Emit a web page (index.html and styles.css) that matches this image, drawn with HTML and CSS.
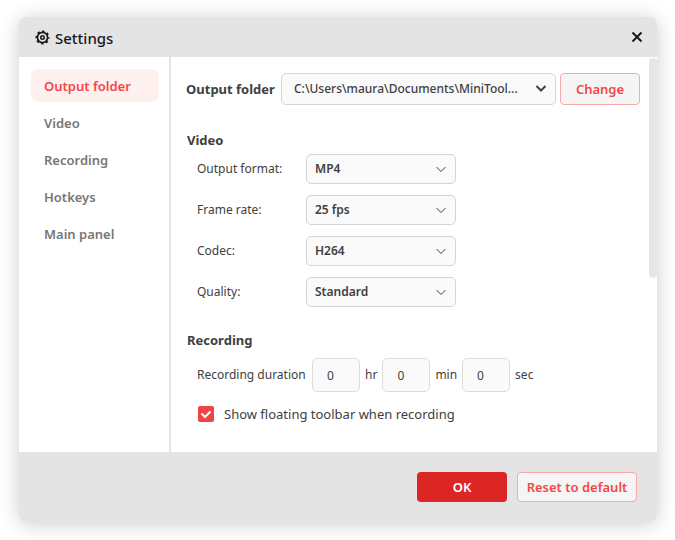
FILE: index.html
```html
<!DOCTYPE html>
<html lang="en">
  <head>
    <meta charset="utf-8">
    <meta name="viewport" content="width=device-width, initial-scale=1.0">
    <title>Settings</title>
    <link rel="stylesheet" href="styles.css">
  </head>
  <body>

  <div class="dialog" role="dialog" aria-labelledby="title">
      <header class="titlebar">
          <svg class="gear" viewBox="0 0 16 16">
              <circle cx="8" cy="8" r="5.400" stroke-width="1.800"/>
              <circle cx="8" cy="8" r="6.600" stroke-width="1.800" stroke-dasharray="2.600 2.584" stroke-dashoffset="1.300"/>
              <circle cx="8" cy="8" r="1.900" stroke-width="1.600"/>
          </svg>
          <h1 id="title">Settings</h1>
          <button class="close" aria-label="Close">
              <svg viewBox="0 0 12 12"><path d="M1.500 1.500l9 9M10.500 1.500l-9 9"/></svg>
          </button>
      </header>

      <div class="body">
          <nav class="sidebar">
              <a href="#output" class="active">Output folder</a>
              <a href="#video">Video</a>
              <a href="#recording">Recording</a>
              <a href="#hotkeys">Hotkeys</a>
              <a href="#panel">Main panel</a>
          </nav>

          <main class="content">
              <section class="folder-row" id="output">
                  <label for="folder" class="heading">Output folder</label>
                  <div class="select folder">
                      <select id="folder"><option>C:\Users\maura\Documents\MiniTool...</option></select>
                      <svg viewBox="0 0 12 12"><path d="M1.500 3l4.500 4.500L10.500 3"/></svg>
                  </div>
                  <button class="btn-outline change">Change</button>
              </section>

              <section class="video" id="video">
                  <h2 class="heading">Video</h2>
                  <div class="field">
                      <label for="format">Output format:</label>
                      <div class="select">
                          <select id="format"><option>MP4</option></select>
                          <svg viewBox="0 0 12 12"><path d="M1.500 4L6 8.500 10.500 4"/></svg>
                      </div>
                  </div>
                  <div class="field">
                      <label for="rate">Frame rate:</label>
                      <div class="select">
                          <select id="rate"><option>25 fps</option></select>
                          <svg viewBox="0 0 12 12"><path d="M1.500 4L6 8.500 10.500 4"/></svg>
                      </div>
                  </div>
                  <div class="field">
                      <label for="codec">Codec:</label>
                      <div class="select">
                          <select id="codec"><option>H264</option></select>
                          <svg viewBox="0 0 12 12"><path d="M1.500 4L6 8.500 10.500 4"/></svg>
                      </div>
                  </div>
                  <div class="field">
                      <label for="quality">Quality:</label>
                      <div class="select">
                          <select id="quality"><option>Standard</option></select>
                          <svg viewBox="0 0 12 12"><path d="M1.500 4L6 8.500 10.500 4"/></svg>
                      </div>
                  </div>
              </section>

              <section class="recording" id="recording">
                  <h2 class="heading">Recording</h2>
                  <div class="duration">
                      <span class="duration-label">Recording duration</span>
                      <input type="text" id="hr" value="0"><label for="hr">hr</label>
                      <input type="text" id="min" value="0"><label for="min">min</label>
                      <input type="text" id="sec" value="0"><label for="sec">sec</label>
                  </div>
                  <div class="check">
                      <span class="box">
                          <input type="checkbox" id="toolbar" checked>
                          <svg viewBox="0 0 16 16"><path d="M3.500 7.500l3.500 3.500 5.500-5.500"/></svg>
                      </span>
                      <label for="toolbar">Show floating toolbar when recording</label>
                  </div>
              </section>
          </main>
          <div class="scrollbar"><div class="thumb"></div></div>
      </div>

      <footer class="footer">
          <button class="btn-ok">OK</button>
          <button class="btn-outline reset">Reset to default</button>
      </footer>
  </div>

  </body>
</html>
```
FILE: styles.css
```css
* {
    box-sizing: border-box;
}

body {
    margin: 0;
    min-height: 100vh;
    padding: 17px 18px 18px 19px;
    display: flex;
    background-color: #fff;
    color: #404040;
    font-family: "Noto Sans", "Open Sans", sans-serif;
    font-size: 12px;
    line-height: 18px;
}

button, input, select {
    font: inherit;
    color: inherit;
    margin: 0;
}

svg {
    fill: none;
    stroke: currentColor;
}

/* Window */
.dialog {
    flex: 1;
    display: flex;
    flex-direction: column;
    border-radius: 7px;
    overflow: hidden;
    background-color: #fff;
    box-shadow: 0 2px 20px rgba(0,0,0,0.2);
}

.titlebar {
    display: flex;
    align-items: center;
    height: 40px;
    padding: 0 14px 0 16px;
    background-color: #e4e4e4;
    color: #1a1a1a;
}
.gear {
    width: 15px;
    height: 15px;
    margin-right: 5px;
}
.titlebar h1 {
    flex: 1;
    margin: 2px 0 0;
    font-size: 15px;
    font-weight: 500;
}
.close {
    display: flex;
    padding: 0;
    border: none;
    background: none;
}
.close svg {
    width: 12px;
    height: 12px;
    stroke-width: 2;
}

.body {
    flex: 1;
    display: flex;
}

/* Left menu */
.sidebar {
    width: 152px;
    padding: 12px 10px 0 12px;
    border-right: 2px solid #e4e4e4;
    display: flex;
    flex-direction: column;
    gap: 4px;
}
.sidebar a {
    padding: 8px 13px 7px;
    border-radius: 7px;
    font-size: 13px;
    font-weight: 600;
    color: #777;
    text-decoration: none;
}
.sidebar a.active {
    background-color: #fff0f0;
    color: #f04848;
}

/* Settings */
.content {
    flex: 1;
    padding: 16px 9px 0 15px;
}
.heading {
    margin: 0;
    font-size: 13px;
    font-weight: 700;
    white-space: nowrap;
}
.folder-row {
    display: flex;
    align-items: center;
    gap: 4px;
    height: 32px;
}
.folder-row .heading {
    min-width: 91px;
}

.select {
    display: grid;
    align-items: center;
    width: 150px;
    height: 30px;
}
.select select {
    grid-area: 1 / 1;
    appearance: none;
    width: 100%;
    height: 100%;
    padding: 0 28px 0 8px;
    border: 1px solid #d4d4d4;
    border-radius: 5px;
    background-color: #fafafa;
    font-weight: 600;
}
.select svg {
    grid-area: 1 / 1;
    justify-self: end;
    width: 12px;
    height: 12px;
    margin-right: 9px;
    pointer-events: none;
}
.select.folder {
    flex: 1;
    height: 32px;
}
.select.folder select {
    padding-left: 12px;
    font-weight: 500;
}
.select.folder svg {
    stroke-width: 2;
}

.btn-outline {
    padding: 0;
    border: 1px solid #f9a8a8;
    border-radius: 4px;
    background-color: #f5f5f5;
    color: #f04848;
    font-size: 13px;
    font-weight: 600;
}
.change {
    width: 80px;
    height: 32px;
}

.video, .recording {
    padding-left: 1px;
}
.video {
    margin-top: 26px;
}
.video .heading {
    margin-bottom: 5px;
}
.field {
    display: flex;
    align-items: center;
    padding-left: 10px;
}
.field + .field {
    margin-top: 11px;
}
.field label {
    width: 109px;
}

.recording {
    margin-top: 24px;
}
.recording .heading {
    margin-bottom: 9px;
}
.duration {
    display: flex;
    align-items: center;
    gap: 5px;
    padding-left: 10px;
}
.duration-label {
    width: 110px;
}
.duration input {
    width: 48px;
    height: 34px;
    padding: 0 14px;
    border: 1px solid #ddd;
    border-radius: 5px;
    background-color: #fafafa;
}

.check {
    display: flex;
    align-items: center;
    gap: 10px;
    margin-top: 13px;
    padding-left: 11px;
    font-size: 13px;
}
.box {
    display: grid;
    width: 16px;
    height: 16px;
}
.box input {
    grid-area: 1 / 1;
    appearance: none;
    border-radius: 2px;
    background-color: #ef4444;
}
.box svg {
    grid-area: 1 / 1;
    stroke: #fff;
    stroke-width: 2;
    pointer-events: none;
}

.scrollbar {
    width: 8px;
    padding-top: 1px;
}
.thumb {
    height: 220px;
    border-radius: 4px;
    background-color: #e6e6e6;
}

/* Bottom buttons */
.footer {
    display: flex;
    align-items: center;
    justify-content: flex-end;
    gap: 10px;
    height: 70px;
    padding: 0 20px;
    background-color: #e4e4e4;
}
.btn-ok {
    width: 90px;
    height: 30px;
    border: none;
    border-radius: 4px;
    background-color: #dc2626;
    color: #fff;
    font-size: 13px;
    font-weight: 600;
}
.reset {
    width: 120px;
    height: 30px;
}
```
